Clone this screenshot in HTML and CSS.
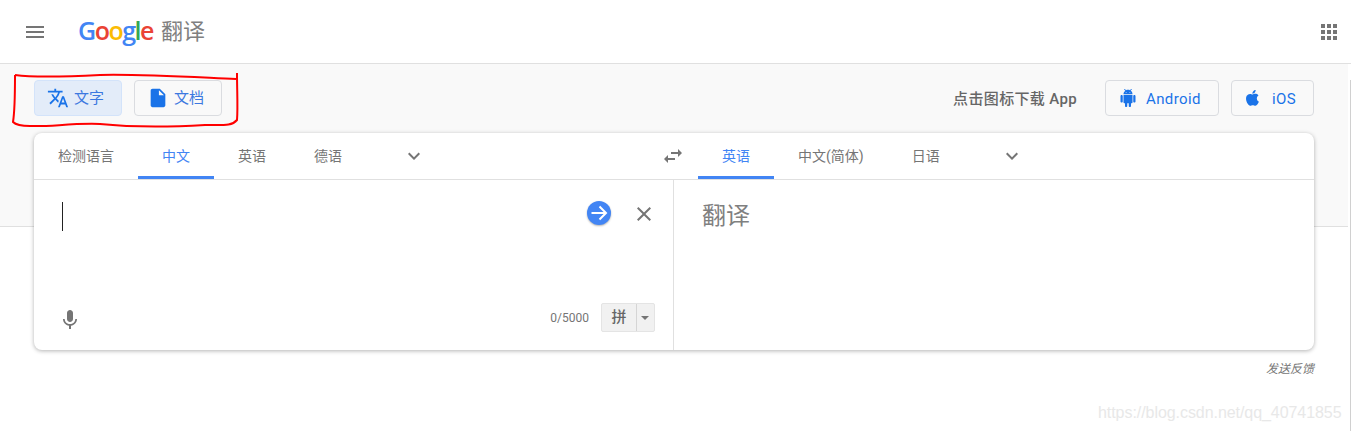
FILE: index.html
```html
<!DOCTYPE html>
<html lang="zh-CN">
<head>
    <meta charset="UTF-8">
    <title>Google 翻译</title>
    <link rel="stylesheet" href="styles.css">
</head>
<body>
    <header class="topbar">
        <svg class="menu-icon" width="24" height="24" viewBox="0 0 24 24"><path d="M3 18h18v-2H3v2zm0-5h18v-2H3v2zm0-7v2h18V6H3z"/></svg>
        <div class="logo"><span class="g-blue">G</span><span class="g-red">o</span><span class="g-yellow">o</span><span class="g-blue">g</span><span class="g-green">l</span><span class="g-red">e</span></div>
        <div class="product">翻译</div>
        <svg class="apps-icon" width="18" height="18" viewBox="0 0 18 18"><path d="M1 1h4v4H1zM7 1h4v4H7zM13 1h4v4h-4zM1 7h4v4H1zM7 7h4v4H7zM13 7h4v4h-4zM1 13h4v4H1zM7 13h4v4H7zM13 13h4v4h-4z"/></svg>
    </header>

    <section class="band">
        <div class="toolbar">
            <button class="mode mode-on">
                <svg width="22" height="22" viewBox="0 0 24 24"><path d="M12.87 15.07l-2.54-2.51.03-.03c1.74-1.94 2.98-4.17 3.71-6.53H17V4h-7V2H8v2H1v1.99h11.17C11.5 7.92 10.44 9.75 9 11.35 8.07 10.32 7.3 9.19 6.69 8h-2c.73 1.63 1.73 3.17 2.98 4.56l-5.09 5.02L4 19l5-5 3.11 3.11.76-2.04zM18.5 10h-2L12 22h2l1.12-3h4.75L21 22h2l-4.5-12zm-2.62 7l1.62-4.33L19.12 17h-3.24z"/></svg>
                <span>文字</span>
            </button>
            <button class="mode">
                <svg width="22" height="22" viewBox="0 0 24 24"><path d="M14 2H6c-1.1 0-2 .9-2 2v16c0 1.1.9 2 2 2h12c1.1 0 2-.9 2-2V8l-6-6zm-1 7V3.5L18.5 9H13z"/></svg>
                <span>文档</span>
            </button>
            <div class="spacer"></div>
            <div class="download">点击图标下载 App</div>
            <button class="store store-android">
                <svg width="18" height="20" viewBox="0 0 24 24"><path d="M6 18c0 .55.45 1 1 1h1v3.5c0 .83.67 1.5 1.5 1.5s1.5-.67 1.5-1.5V19h2v3.5c0 .83.67 1.5 1.5 1.5s1.5-.67 1.5-1.5V19h1c.55 0 1-.45 1-1V8H6v10zM3.5 8C2.67 8 2 8.67 2 9.5v7c0 .83.67 1.5 1.5 1.5S5 17.33 5 16.500v-7C5 8.670 4.330 8 3.500 8zm17 0c-.83 0-1.500.67-1.500 1.500v7c0 .83.670 1.500 1.500 1.500s1.500-.67 1.500-1.500v-7c0-.83-.67-1.500-1.500-1.500zm-4.970-5.840l1.300-1.300c.2-.2.2-.51 0-.71-.2-.2-.51-.2-.71 0l-1.480 1.480C13.850 1.230 12.950 1 12 1c-.96 0-1.860.23-2.660.63L7.850.15c-.2-.2-.51-.2-.71 0-.2.2-.2.51 0 .71l1.310 1.310C6.970 3.260 6 5.010 6 7h12c0-1.990-.97-3.750-2.470-4.840zM10 5H9V4h1v1zm5 0h-1V4h1v1z"/></svg>
                <span>Android</span>
            </button>
            <button class="store store-ios">
                <svg width="18" height="18" viewBox="0 0 24 24"><path d="M17.05 12.54c-.03-2.650 2.170-3.930 2.270-3.990-1.240-1.810-3.160-2.060-3.840-2.090-1.630-.17-3.190.96-4.020.96-.83 0-2.110-.94-3.470-.91-1.780.03-3.430 1.040-4.350 2.630-1.860 3.220-.48 7.980 1.330 10.600.89 1.280 1.940 2.720 3.320 2.670 1.330-.05 1.840-.86 3.450-.86 1.610 0 2.060.86 3.470.83 1.430-.02 2.340-1.300 3.220-2.590 1.010-1.480 1.430-2.920 1.450-3 -.03-.01-2.780-1.070-2.810-4.250zM14.410 4.750c.73-.89 1.230-2.120 1.090-3.350-1.060.04-2.340.7-3.100 1.590-.68.79-1.280 2.050-1.120 3.250 1.180.09 2.390-.6 3.130-1.490z"/></svg>
                <span>iOS</span>
            </button>
        </div>

        <div class="card">
            <div class="lang-row">
                <div class="lang-side">
                    <div class="tab">检测语言</div>
                    <div class="tab tab-on">中文</div>
                    <div class="tab">英语</div>
                    <div class="tab">德语</div>
                    <svg class="chevron" width="24" height="24" viewBox="0 0 24 24"><path d="M7.410 8.590L12 13.170l4.590-4.580L18 10l-6 6-6-6z"/></svg>
                </div>
                <div class="lang-side lang-target">
                    <svg class="swap" width="24" height="24" viewBox="0 0 24 24"><path d="M6.990 11L3 15l3.990 4v-3H14v-2H6.990v-3zM21 9l-3.990-4v3H10v2h7.010v3L21 9z"/></svg>
                    <div class="tab tab-on">英语</div>
                    <div class="tab">中文(简体)</div>
                    <div class="tab">日语</div>
                    <svg class="chevron" width="24" height="24" viewBox="0 0 24 24"><path d="M7.410 8.590L12 13.170l4.590-4.580L18 10l-6 6-6-6z"/></svg>
                </div>
            </div>
            <div class="panes">
                <div class="pane-source">
                    <div class="source-top">
                        <div class="caret"></div>
                        <div class="go-btn">
                            <svg width="20" height="20" viewBox="0 0 20 20"><path d="M2.500 10h14M10.500 3.500L17 10l-6.500 6.500" fill="none" stroke="#fff" stroke-width="2"/></svg>
                        </div>
                        <svg class="clear" width="24" height="24" viewBox="0 0 24 24"><path d="M19 6.410L17.590 5 12 10.590 6.410 5 5 6.410 10.590 12 5 17.590 6.410 19 12 13.410 17.590 19 19 17.590 13.410 12z"/></svg>
                    </div>
                    <div class="source-bottom">
                        <svg class="mic" width="24" height="24" viewBox="0 0 24 24"><path d="M12 14c1.660 0 3-1.340 3-3V5c0-1.660-1.340-3-3-3S9 3.340 9 5v6c0 1.660 1.340 3 3 3zm5.300-3c0 3-2.540 5.100-5.300 5.100S6.700 14 6.700 11H5c0 3.410 2.720 6.230 6 6.720V21h2v-3.280c3.280-.48 6-3.300 6-6.720h-1.700z"/></svg>
                        <span class="counter">0/5000</span>
                        <div class="ime">
                            <span class="ime-char">拼</span>
                            <span class="ime-arrow"></span>
                        </div>
                    </div>
                </div>
                <div class="pane-target">翻译</div>
            </div>
        </div>
    </section>

    <div class="feedback">发送反馈</div>

    <div class="watermark">https://blog.csdn.net/qq_40741855</div>
    <div class="edge"></div>
    <svg class="scribble" width="1351" height="431" viewBox="0 0 1351 431"><path d="M15 75C30 77 60 77 100 75C140 74 190 77 236 79M237 73C237 90 238 108 237 120C232 126 225 125 205 125C170 127 130 127 100 124C70 123 50 127 30 126C22 126 16 125 13 122C15 110 15 90 15 75"/></svg>
</body>
</html>
```

FILE: styles.css
```css
body {
    margin: 0;
    background: #fff;
    font-family: "Roboto", "Noto Sans CJK SC", sans-serif;
    height: 431px;
    overflow: hidden;
}

/* top bar */
.topbar {
    display: flex;
    align-items: center;
    height: 63px;
    border-bottom: 1px solid #e0e0e0;
}

.menu-icon {
    fill: #757575;
    margin-left: 23px;
}

.logo {
    margin-left: 31px;
    margin-bottom: 3px;
    font-family: "Open Sans", sans-serif;
    font-size: 25px;
    font-weight: 600;
    letter-spacing: -1.5px;
    line-height: 30px;
}

.g-blue { color: #4285f4; }
.g-red { color: #ea4335; }
.g-yellow { color: #fbbc05; }
.g-green { color: #34a853; }

.product {
    margin-left: 8px;
    margin-bottom: 5px;
    font-size: 22px;
    color: #808080;
}

.apps-icon {
    fill: #757575;
    margin-left: auto;
    margin-right: 13px;
}

/* grey band */
.band {
    height: 162px;
    background: #f9f9f9;
    border-bottom: 1px solid #e0e0e0;
    margin-right: 3px;
    padding-left: 34px;
    padding-right: 34px;
}

.toolbar {
    display: flex;
    align-items: center;
    padding-top: 16px;
    height: 36px;
}

.spacer {
    flex: 1;
}

.mode, .store {
    display: flex;
    align-items: center;
    height: 36px;
    border: 1px solid #dadce0;
    border-radius: 4px;
    background: #f9f9f9;
    color: #1a73e8;
    fill: #1a73e8;
    font-family: inherit;
    padding: 0;
    box-sizing: border-box;
}

.mode {
    width: 88px;
    margin-right: 12px;
    font-size: 15px;
    padding-left: 12px;
}

.mode span {
    margin-left: 5px;
    margin-bottom: 3px;
    color: #3c78e0;
}

.mode-on {
    background: #e3ecf9;
    border-color: #d3e3fa;
}

.download {
    font-size: 15px;
    font-weight: 500;
    letter-spacing: 0.35px;
    color: #666;
    margin-right: 28px;
    margin-bottom: 2px;
}

.store {
    font-size: 15px;
    letter-spacing: 0.4px;
}

.store-android {
    width: 114px;
    margin-right: 12px;
    padding-left: 13px;
}

.store-android span {
    margin-left: 9px;
    margin-top: 1px;
}

.store-ios {
    width: 83px;
    padding-left: 12px;
}

.store-ios span {
    margin-left: 10px;
    margin-top: 1px;
}

/* translate card */
.card {
    margin-top: 17px;
    height: 217px;
    background: #fff;
    border-radius: 8px;
    box-shadow: 0 1px 4px rgba(0, 0, 0, 0.3);
}

.lang-row {
    display: flex;
    height: 47px;
    border-bottom: 1px solid #e0e0e0;
    box-sizing: border-box;
}

.lang-side {
    display: flex;
    align-items: stretch;
    width: 639px;
}

.lang-target {
    flex: 1;
    width: auto;
}

.tab {
    padding: 0 24px;
    font-size: 14px;
    line-height: 46px;
    color: #757575;
    height: 46px;
    box-sizing: border-box;
}

.tab-on {
    color: #4285f4;
    border-bottom: 3px solid #4285f4;
}

.chevron {
    fill: #757575;
    align-self: center;
    margin-left: 36px;
}

.swap {
    fill: #757575;
    align-self: center;
    margin-right: 13px;
    margin-left: -12px;
}

.panes {
    display: flex;
    height: 170px;
}

.pane-source {
    width: 639px;
    border-right: 1px solid #e0e0e0;
    display: flex;
    flex-direction: column;
    justify-content: space-between;
}

.source-top {
    display: flex;
    align-items: center;
    padding-top: 21px;
    padding-left: 28px;
}

.caret {
    width: 1px;
    height: 29px;
    background: #222;
}

.go-btn {
    width: 24px;
    height: 24px;
    border-radius: 50%;
    background: #4285f4;
    box-shadow: 0 1px 2px rgba(0, 0, 0, 0.3);
    display: flex;
    align-items: center;
    justify-content: center;
    margin-left: 524px;
    margin-bottom: 7px;
}

.clear {
    fill: #757575;
    margin-left: 21px;
    margin-bottom: 5px;
}

.source-bottom {
    display: flex;
    align-items: center;
    padding: 0 18px 18px 24px;
}

.mic {
    fill: #757575;
    margin-top: 4px;
}

.counter {
    margin-left: auto;
    font-size: 12px;
    color: #757575;
    margin-right: 12px;
}

.ime {
    display: flex;
    width: 54px;
    height: 29px;
    background: #f1f1f1;
    border: 1px solid #e4e4e4;
    border-radius: 2px;
    box-sizing: border-box;
}

.ime-char {
    width: 34px;
    border-right: 1px solid #d5d5d5;
    text-align: center;
    font-size: 15px;
    font-weight: 500;
    line-height: 26px;
    color: #666;
}

.ime-arrow {
    width: 0;
    height: 0;
    margin: 12px 0 0 4px;
    border-left: 4px solid transparent;
    border-right: 4px solid transparent;
    border-top: 4px solid #757575;
}

.pane-target {
    padding: 18px 0 0 28px;
    font-size: 24px;
    line-height: 36px;
    color: #808080;
}

/* bottom */
.feedback {
    margin-top: 132px;
    margin-right: 37px;
    text-align: right;
    font-size: 12px;
    font-style: italic;
    color: #757575;
}

/* overlays */
.watermark {
    position: absolute;
    left: 1098px;
    top: 404px;
    font-family: "Liberation Sans", sans-serif;
    font-size: 16px;
    letter-spacing: -0.060px;
    color: #e8e8e8;
}

.edge {
    position: absolute;
    left: 1350px;
    top: 80px;
    width: 1px;
    height: 351px;
    background: #d0d0d0;
}

.scribble {
    position: absolute;
    left: 0;
    top: 0;
    pointer-events: none;
}

.scribble path {
    fill: none;
    stroke: #f00;
    stroke-width: 2;
}
```
